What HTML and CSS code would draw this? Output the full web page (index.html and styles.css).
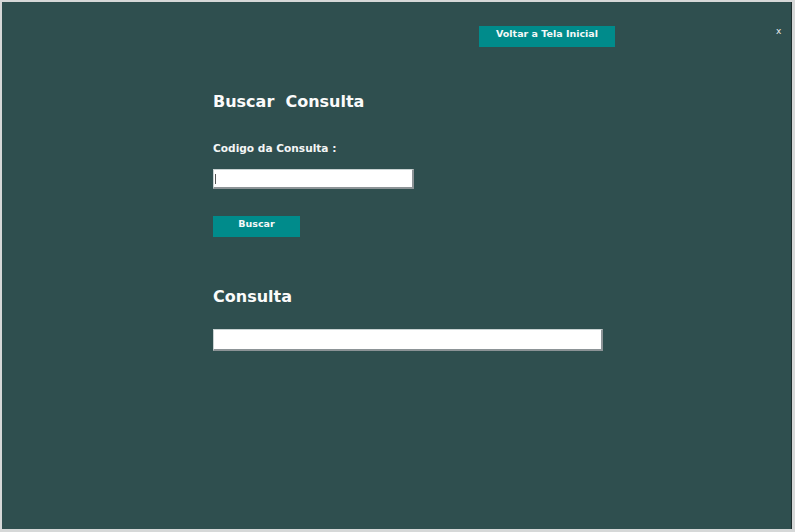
FILE: index.html
```html
<!DOCTYPE html>
<html lang="pt">
<head>
<meta charset="utf-8">
<title>Buscar Consulta</title>
<link rel="stylesheet" href="styles.css">
</head>
<body>
<div class="window">
  <div class="close">x</div>
  <div class="topbar">
    <button class="btn btn-back">Voltar a Tela Inicial</button>
  </div>
  <main class="content">
    <h1 class="title">Buscar&nbsp; Consulta</h1>
    <label class="label">Codigo da Consulta :</label>
    <div class="field field-code"><span class="caret"></span></div>
    <button class="btn btn-search">Buscar</button>
    <h2 class="title title-2">Consulta</h2>
    <div class="field field-result"></div>
  </main>
</div>
</body>
</html>
```
FILE: styles.css
```css
html, body {
  margin: 0;
  padding: 0;
}
body {
  width: 795px;
  height: 532px;
  background: #d6d8d8;
  font-family: "DejaVu Sans", sans-serif;
  overflow: hidden;
}
.window {
  position: relative;
  margin: 2px 0 0 2px;
  width: 790px;
  height: 527px;
  background: #2f4f4f;
  border-right: 1px solid #1e2e2e;
  box-sizing: border-box;
}
.close {
  position: absolute;
  top: 23px;
  left: 774px;
  color: #e8ecec;
  font-size: 9px;
  line-height: 12px;
}
.topbar {
  display: flex;
  padding-top: 24px;
  padding-left: 477px;
}
.btn {
  border: none;
  background: #008b8b;
  color: #f4f8f8;
  font-family: "DejaVu Sans", sans-serif;
  font-weight: bold;
  font-size: 9.5px;
  padding: 0 0 6px 0;
  margin: 0;
  display: block;
}
.btn-back {
  width: 136px;
  height: 21px;
}
.content {
  padding-left: 211px;
  display: flex;
  flex-direction: column;
  align-items: flex-start;
}
.title {
  margin: 45px 0 0 0;
  font-size: 16px;
  line-height: 20px;
  font-weight: bold;
  color: #fbfbfb;
}
.title-2 {
  margin-top: 50px;
}
.label {
  margin-top: 30px;
  font-size: 10.6px;
  line-height: 13px;
  font-weight: bold;
  color: #f4f6f6;
}
.field {
  background: #fff;
  box-sizing: border-box;
  border-top: 1px solid #c9d2d2;
  border-left: 1px solid #c9d2d2;
  border-right: 2px solid #8c9396;
  border-bottom: 2px solid #8c9396;
  display: flex;
  align-items: center;
}
.field-code {
  margin-top: 14px;
  width: 201px;
  height: 20px;
}
.caret {
  display: block;
  width: 1px;
  height: 10px;
  margin-left: 1px;
  background: #555;
}
.btn-search {
  margin-top: 27px;
  width: 87px;
  height: 21px;
}
.field-result {
  margin-top: 22px;
  width: 390px;
  height: 22px;
}
```
